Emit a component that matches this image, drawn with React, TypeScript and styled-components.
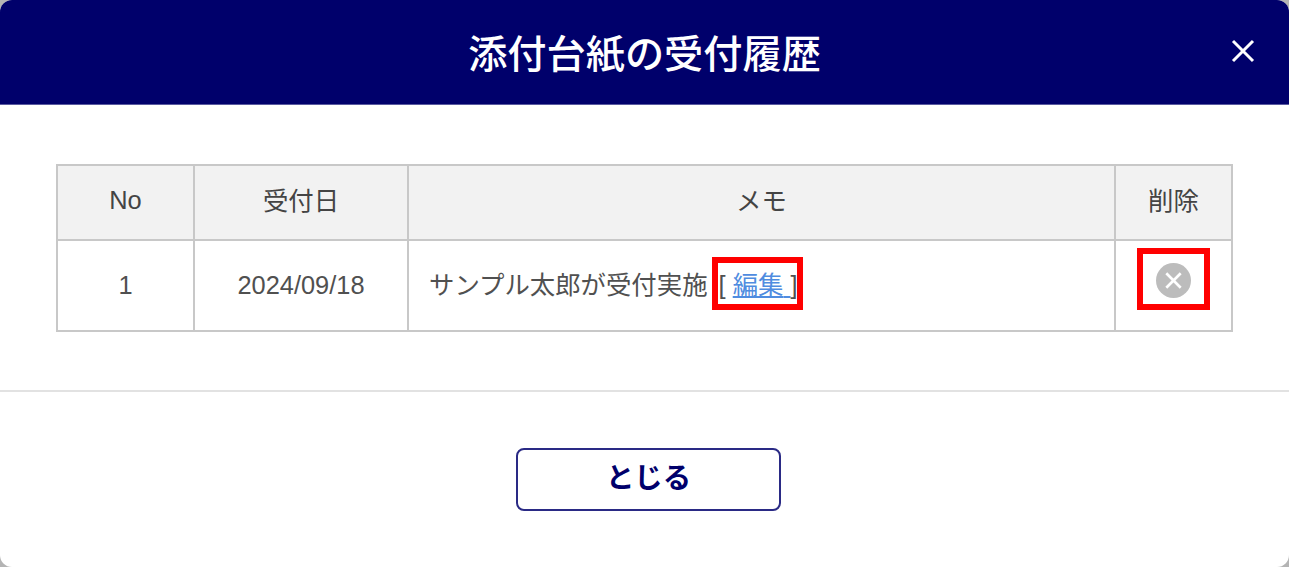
import styled, { createGlobalStyle } from "styled-components";

const GlobalStyle = createGlobalStyle`
  html, body {
    margin: 0;
    padding: 0;
    background: #b4b4b4;
  }
  body {
    font-family: "Liberation Sans", "Noto Sans CJK JP", sans-serif;
    color: #444;
  }
`;

const Modal = styled.div`
  width: 1289px;
  height: 567px;
  background: #fff;
  border-radius: 12px;
  overflow: hidden;
  display: flex;
  flex-direction: column;
`;

const Header = styled.header`
  height: 105px;
  flex: none;
  box-sizing: border-box;
  background: #00006b;
  border-bottom: 1px solid #5a5aa0;
  display: flex;
  align-items: center;
  justify-content: center;
  position: relative;
`;

const Title = styled.h1`
  margin: 0 0 3px;
  font-size: 39.2px;
  font-weight: 500;
  color: #fff;
`;

const CloseButton = styled.button`
  position: absolute;
  top: 39px;
  right: 34px;
  width: 24px;
  height: 24px;
  padding: 0;
  border: none;
  background: none;
  cursor: pointer;
`;

const Body = styled.div`
  padding: 59px 56px 58px 56px;
  border-bottom: 2px solid #e2e2e2;
`;

const Table = styled.table`
  width: 1177px;
  table-layout: fixed;
  border-collapse: collapse;
  font-size: 25.4px;
`;

const HeadRow = styled.tr`
  height: 75px;
`;

const BodyRow = styled.tr`
  height: 91px;
`;

const Th = styled.th<{ $width?: number; $lift?: number }>`
  width: ${(p) => (p.$width ? `${p.$width}px` : "auto")};
  padding: 0 0 ${(p) => p.$lift ?? 8}px;
  background: #f2f2f2;
  border: 2px solid #c8c8c8;
  font-weight: 400;
  color: #444;
`;

const Td = styled.td<{ $left?: boolean; $lift?: number }>`
  padding: 0 0 ${(p) => p.$lift ?? 0}px ${(p) => (p.$left ? "20px" : "0")};
  border: 2px solid #c8c8c8;
  text-align: ${(p) => (p.$left ? "left" : "center")};
  color: #505050;
`;

const Annotated = styled.span<{ $gap?: number }>`
  position: relative;
  display: inline-block;
  margin-left: ${(p) => p.$gap ?? 0}px;
`;

const Highlight = styled.span<{ $x: number; $y: number; $w: number; $h: number }>`
  position: absolute;
  left: ${(p) => p.$x}px;
  top: ${(p) => p.$y}px;
  width: ${(p) => p.$w}px;
  height: ${(p) => p.$h}px;
  box-sizing: border-box;
  border: 6px solid #ff0000;
  pointer-events: none;
`;

const EditLink = styled.a`
  color: #4f8ce0;
  text-decoration: underline;
  cursor: pointer;
`;

const DeleteIcon = styled.svg`
  display: block;
  margin: 0 auto;
`;

const Footer = styled.div`
  flex: 1;
  display: flex;
  justify-content: center;
  padding: 56px 0 0 8px;
`;

const CloseAction = styled.button`
  width: 265px;
  height: 63px;
  box-sizing: border-box;
  background: #fff;
  border: 2px solid #2a2a85;
  border-radius: 8px;
  font-family: inherit;
  font-size: 28.4px;
  font-weight: 700;
  color: #00006b;
  padding: 0 0 9px;
  cursor: pointer;
`;

export default function App() {
  return (
    <>
      <GlobalStyle />
      <Modal>
        <Header>
          <Title>添付台紙の受付履歴</Title>
          <CloseButton aria-label="閉じる">
            <svg width="24" height="24" viewBox="0 0 24 24">
              <path d="M2 2 L22 22 M22 2 L2 22" stroke="#fff" strokeWidth="3" />
            </svg>
          </CloseButton>
        </Header>
        <Body>
          <Table>
            <thead>
              <HeadRow>
                <Th $width={135} $lift={4}>No</Th>
                <Th $width={212}>受付日</Th>
                <Th>メモ</Th>
                <Th $width={115}>削除</Th>
              </HeadRow>
            </thead>
            <tbody>
              <BodyRow>
                <Td>1</Td>
                <Td>2024/09/18</Td>
                <Td $left $lift={6}>
                  サンプル太郎が受付実施{" "}
                  <Annotated $gap={4}>
                    [ <EditLink>編集{"\u00a0"}</EditLink>]
                    <Highlight $x={-7} $y={-8} $w={91} $h={53} />
                  </Annotated>
                </Td>
                <Td $lift={4}>
                  <Annotated>
                    <DeleteIcon width="35" height="35" viewBox="0 0 34 34">
                      <circle cx="17" cy="17" r="17" fill="#bcbcbc" />
                      <path d="M10 10 L24 24 M24 10 L10 24" stroke="#fff" strokeWidth="2.6" />
                    </DeleteIcon>
                    <Highlight $x={-19} $y={-15} $w={73} $h={62} />
                  </Annotated>
                </Td>
              </BodyRow>
            </tbody>
          </Table>
        </Body>
        <Footer>
          <CloseAction>とじる</CloseAction>
        </Footer>
      </Modal>
    </>
  );
}
